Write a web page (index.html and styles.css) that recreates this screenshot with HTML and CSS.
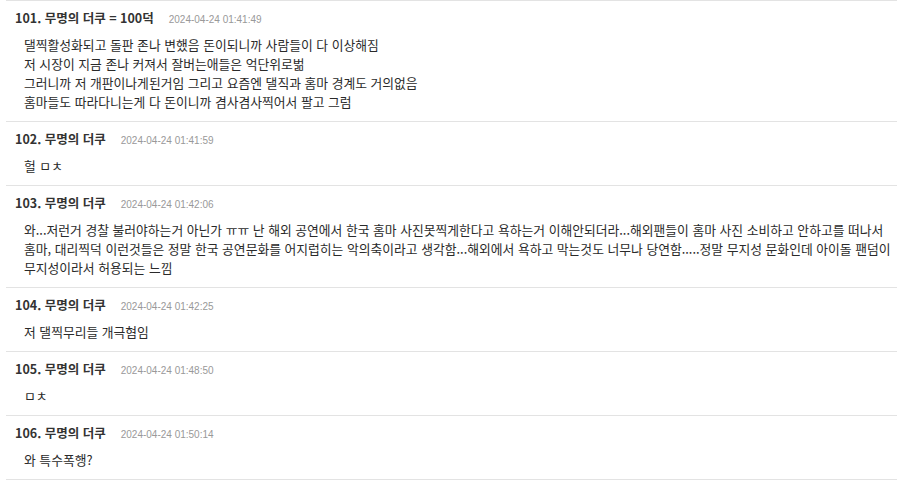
FILE: index.html
```html
<!DOCTYPE html>
<html lang="ko">
<head>
    <meta charset="UTF-8">
    <meta name="viewport" content="width=device-width, initial-scale=1.0">
    <title>댓글</title>
    <link rel="stylesheet" href="styles.css">
</head>
<body>
    <div class="cmt-list">
        <div class="cmt prev"></div>
        <div class="cmt">
            <div class="cmt-head">
                <span class="cmt-name">101. 무명의 더쿠 = 100덕</span>
                <span class="cmt-date">2024-04-24 01:41:49</span>
            </div>
            <div class="cmt-body">
                댈찍활성화되고 돌판 존나 변했음 돈이되니까 사람들이 다 이상해짐<br>
                저 시장이 지금 존나 커져서 잘버는애들은 억단위로벎<br>
                그러니까 저 개판이나게된거임 그리고 요즘엔 댈직과 홈마 경계도 거의없음<br>
                홈마들도 따라다니는게 다 돈이니까 겸사겸사찍어서 팔고 그럼
            </div>
        </div>
        <div class="cmt">
            <div class="cmt-head">
                <span class="cmt-name">102. 무명의 더쿠</span>
                <span class="cmt-date">2024-04-24 01:41:59</span>
            </div>
            <div class="cmt-body">헐 ㅁㅊ</div>
        </div>
        <div class="cmt">
            <div class="cmt-head">
                <span class="cmt-name">103. 무명의 더쿠</span>
                <span class="cmt-date">2024-04-24 01:42:06</span>
            </div>
            <div class="cmt-body">와...저런거 경찰 불러야하는거 아닌가 ㅠㅠ 난 해외 공연에서 한국 홈마 사진못찍게한다고 욕하는거 이해안되더라...해외팬들이 홈마 사진 소비하고 안하고를 떠나서 홈마, 대리찍덕 이런것들은 정말 한국 공연문화를 어지럽히는 악의축이라고 생각함...해외에서 욕하고 막는것도 너무나 당연함.....정말 무지성 문화인데 아이돌 팬덤이 무지성이라서 허용되는 느낌</div>
        </div>
        <div class="cmt">
            <div class="cmt-head">
                <span class="cmt-name">104. 무명의 더쿠</span>
                <span class="cmt-date">2024-04-24 01:42:25</span>
            </div>
            <div class="cmt-body">저 댈찍무리들 개극혐임</div>
        </div>
        <div class="cmt">
            <div class="cmt-head">
                <span class="cmt-name">105. 무명의 더쿠</span>
                <span class="cmt-date">2024-04-24 01:48:50</span>
            </div>
            <div class="cmt-body">ㅁㅊ</div>
        </div>
        <div class="cmt">
            <div class="cmt-head">
                <span class="cmt-name">106. 무명의 더쿠</span>
                <span class="cmt-date">2024-04-24 01:50:14</span>
            </div>
            <div class="cmt-body">와 특수폭행?</div>
        </div>
    </div>
</body>
</html>
```

FILE: styles.css
```css
html, body{
    margin: 0;
    padding: 0;
    background-color: #fff;
}
body{
    font-family: "Noto Sans CJK KR", "Noto Sans", sans-serif;
    color: #333;
}
.cmt-list{
    width: 891px;
    margin: -1px 0 0 6px;
}
.cmt{
    border-bottom: 1px solid #e3e3e3;
    padding: 7px 0 10px 9px;
}
.cmt.prev{
    padding: 0;
    height: 0;
    border-bottom-width: 2px;
}
.cmt-head{
    display: flex;
    align-items: baseline;
    gap: 15px;
    height: 20px;
    line-height: 20px;
}
.cmt-name{
    font-size: 12.5px;
    font-weight: bold;
    color: #333;
}
.cmt-date{
    font-family: "Liberation Sans", Arial, sans-serif;
    font-size: 10px;
    color: #999;
}
.cmt-body{
    margin-top: 7px;
    padding: 0 6px 0 9px;
    font-size: 12.8px;
    line-height: 19px;
    color: #2a2a2a;
    word-break: keep-all;
}
```
